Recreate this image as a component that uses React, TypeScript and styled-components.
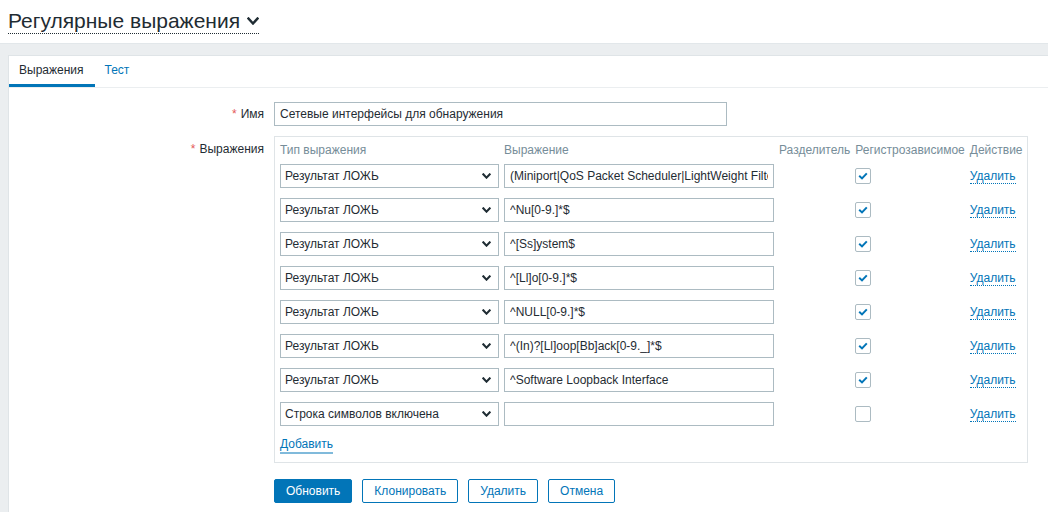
import React from "react";
import styled, { createGlobalStyle } from "styled-components";

const GlobalStyle = createGlobalStyle`
  html, body { margin: 0; padding: 0; }
  body {
    background: #ebeef0;
    font-family: "Liberation Sans", Arial, sans-serif;
    font-size: 12px;
    color: #1f2c33;
    overflow: hidden;
  }
  * { box-sizing: border-box; }
`;

const Header = styled.header`
  background: #fff;
  height: 44px;
  border-bottom: 1px solid #e2e7ea;
  padding-left: 8px;
`;

const Title = styled.h1`
  display: inline-flex;
  align-items: center;
  gap: 7px;
  margin: 9px 0 0;
  font-size: 21px;
  font-weight: normal;
  line-height: 24px;
  color: #1f2c33;
  border-bottom: 1px dotted #1f2c33;
`;

const Main = styled.main`
  padding: 11px 0 0 8px;
`;

const Panel = styled.section`
  background: #fff;
  border: 1px solid #dfe4e7;
  border-right: none;
  min-height: 470px;
`;

const TabBar = styled.nav`
  display: flex;
  border-bottom: 1px solid #ebeef0;
`;

const Tab = styled.div<{ $active?: boolean }>`
  height: 31px;
  line-height: 28px;
  padding: 0 11px 0 10px;
  color: ${(p) => (p.$active ? "#1f2c33" : "#0275b8")};
  border-bottom: 3px solid ${(p) => (p.$active ? "#0275b8" : "transparent")};
`;

const Form = styled.div`
  padding-top: 14px;
`;

const FormRow = styled.div<{ $top?: number }>`
  display: grid;
  grid-template-columns: 255px 1fr;
  column-gap: 10px;
  margin-top: ${(p) => p.$top ?? 0}px;
  align-items: start;
`;

const Label = styled.label<{ $pad?: number }>`
  text-align: right;
  line-height: 14px;
  padding-top: ${(p) => p.$pad ?? 5}px;
  color: #1f2c33;
`;

const Req = styled.span`
  color: #e45959;
  margin-right: 4px;
`;

const TextInput = styled.input<{ $w: number }>`
  width: ${(p) => p.$w}px;
  height: 24px;
  border: 1px solid #acbbc2;
  border-radius: 0;
  padding: 0 5px;
  font-family: "Liberation Sans", Arial, sans-serif;
  font-size: 12px;
  color: #1f2c33;
  background: #fff;
  outline: none;
  display: block;
`;

const ExprBox = styled.div`
  width: 754px;
  border: 1px solid #dfe4e7;
  padding: 4px 5px 8px;
`;

const ExprGrid = styled.div`
  display: grid;
  grid-template-columns: 219px 270px auto auto auto;
  column-gap: 5px;
  align-items: center;
`;

const HeadCell = styled.div`
  color: #768d99;
  line-height: 18px;
  height: 18px;
  white-space: nowrap;
`;

const Cell = styled.div`
  height: 34px;
  display: flex;
  align-items: center;
`;

const SelectBox = styled.div`
  width: 219px;
  height: 24px;
  border: 1px solid #acbbc2;
  display: flex;
  align-items: center;
  justify-content: space-between;
  padding: 0 7px 0 4px;
  color: #1f2c33;
  background: #fff;
`;

const CheckBox = styled.span`
  width: 16px;
  height: 16px;
  border: 1px solid #acbbc2;
  border-radius: 2px;
  display: inline-flex;
  align-items: center;
  justify-content: center;
  background: #fff;
`;

const DeleteLink = styled.a`
  color: #0275b8;
  line-height: 14px;
  border-bottom: 1px dotted #0275b8;
  text-decoration: none;
  cursor: pointer;
`;

const AddRow = styled.div`
  padding-top: 5px;
`;

const AddLink = styled.a`
  color: #0275b8;
  line-height: 16px;
  display: inline-block;
  border-bottom: 2px solid rgba(2, 117, 184, 0.5);
  text-decoration: none;
`;

const Buttons = styled.div`
  display: flex;
  gap: 10px;
  margin-top: 16px;
`;

const Button = styled.button<{ $primary?: boolean }>`
  height: 24px;
  padding: 0 11px;
  border: 1px solid #0275b8;
  border-radius: 2px;
  background: ${(p) => (p.$primary ? "#0275b8" : "#fff")};
  color: ${(p) => (p.$primary ? "#fff" : "#0275b8")};
  font-family: "Liberation Sans", Arial, sans-serif;
  font-size: 12px;
  line-height: 22px;
  cursor: pointer;
`;

const Chevron = ({ w, h, sw }: { w: number; h: number; sw: number }) => (
  <svg width={w} height={h} viewBox={`0 0 ${w} ${h}`} fill="none">
    <path
      d={`M${sw / 2 + 0.3} ${sw / 2 + 0.3} L${w / 2} ${h - sw / 2 - 0.3} L${w - sw / 2 - 0.3} ${sw / 2 + 0.3}`}
      stroke="#1f2c33"
      strokeWidth={sw}
      strokeLinecap="square"
    />
  </svg>
);

const CheckMark = () => (
  <svg width="10" height="8" viewBox="0 0 10 8" fill="none">
    <path d="M1.2 3.8 L4 6.4 L8.8 1.4" stroke="#0275b8" strokeWidth="2" />
  </svg>
);

type Row = { type: string; expr: string; checked: boolean };

const rows: Row[] = [
  { type: "Результат ЛОЖЬ", expr: "(Miniport|QoS Packet Scheduler|LightWeight Filter)", checked: true },
  { type: "Результат ЛОЖЬ", expr: "^Nu[0-9.]*$", checked: true },
  { type: "Результат ЛОЖЬ", expr: "^[Ss]ystem$", checked: true },
  { type: "Результат ЛОЖЬ", expr: "^[Ll]o[0-9.]*$", checked: true },
  { type: "Результат ЛОЖЬ", expr: "^NULL[0-9.]*$", checked: true },
  { type: "Результат ЛОЖЬ", expr: "^(In)?[Ll]oop[Bb]ack[0-9._]*$", checked: true },
  { type: "Результат ЛОЖЬ", expr: "^Software Loopback Interface", checked: true },
  { type: "Строка символов включена", expr: "", checked: false },
];

export default function App() {
  return (
    <>
      <GlobalStyle />
      <Header>
        <Title>
          Регулярные выражения
          <Chevron w={12} h={8} sw={2.4} />
        </Title>
      </Header>
      <Main>
        <Panel>
          <TabBar>
            <Tab $active>Выражения</Tab>
            <Tab>Тест</Tab>
          </TabBar>
          <Form>
            <FormRow>
              <Label $pad={5}>
                <Req>*</Req>Имя
              </Label>
              <TextInput $w={453} readOnly value="Сетевые интерфейсы для обнаружения" />
            </FormRow>
            <FormRow $top={10}>
              <Label $pad={6}>
                <Req>*</Req>Выражения
              </Label>
              <div>
                <ExprBox>
                  <ExprGrid>
                    <HeadCell>Тип выражения</HeadCell>
                    <HeadCell>Выражение</HeadCell>
                    <HeadCell>Разделитель</HeadCell>
                    <HeadCell>Регистрозависимое</HeadCell>
                    <HeadCell>Действие</HeadCell>
                    {rows.map((r, i) => (
                      <React.Fragment key={i}>
                        <Cell>
                          <SelectBox>
                            <span>{r.type}</span>
                            <Chevron w={9} h={6} sw={2} />
                          </SelectBox>
                        </Cell>
                        <Cell>
                          <TextInput $w={270} readOnly value={r.expr} />
                        </Cell>
                        <Cell />
                        <Cell>
                          <CheckBox>{r.checked && <CheckMark />}</CheckBox>
                        </Cell>
                        <Cell>
                          <DeleteLink>Удалить</DeleteLink>
                        </Cell>
                      </React.Fragment>
                    ))}
                  </ExprGrid>
                  <AddRow>
                    <AddLink>Добавить</AddLink>
                  </AddRow>
                </ExprBox>
                <Buttons>
                  <Button $primary>Обновить</Button>
                  <Button>Клонировать</Button>
                  <Button>Удалить</Button>
                  <Button>Отмена</Button>
                </Buttons>
              </div>
            </FormRow>
          </Form>
        </Panel>
      </Main>
    </>
  );
}
